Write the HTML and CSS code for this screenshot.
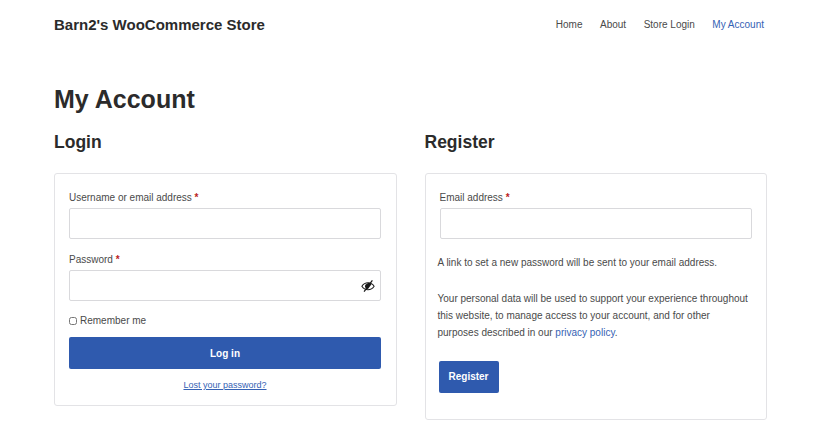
FILE: index.html
```html
<!DOCTYPE html>
<html lang="en">
<head>
<meta charset="utf-8">
<title>My Account</title>
<link rel="stylesheet" href="styles.css">
</head>
<body>
<div class="page">
  <header class="site-header">
    <a class="site-title" href="#">Barn2's WooCommerce Store</a>
    <nav class="site-nav">
      <a href="#">Home</a>
      <a href="#">About</a>
      <a href="#">Store Login</a>
      <a href="#" class="current">My Account</a>
    </nav>
  </header>
  <h1 class="page-title">My Account</h1>
  <div class="columns">
    <section class="col">
      <h2 class="col-title">Login</h2>
      <form class="card">
        <div class="field">
          <label class="label">Username or email address <span class="req">*</span></label>
          <input class="input" type="text">
        </div>
        <div class="field">
          <label class="label">Password <span class="req">*</span></label>
          <div class="pw-wrap">
            <input class="input" type="password">
            <svg class="eye" viewBox="0 0 16 16" width="14" height="14" aria-hidden="true">
              <path d="M1 8.2c1.8-2.7 4.2-4 7-4s5.200 1.300 7 4c-1.800 2.700-4.200 4-7 4s-5.200-1.300-7-4z" fill="none" stroke="#1a1a1a" stroke-width="1.200"/>
              <path d="M5 6.500a3.300 3.300 0 0 0 3 5l4-5.500a3.300 3.300 0 0 0-4-1.500z" fill="#1a1a1a"/>
              <path d="M3.500 14.500 13 1.500" fill="none" stroke="#1a1a1a" stroke-width="1.400"/>
            </svg>
          </div>
        </div>
        <label class="remember"><input class="check" type="checkbox"> Remember me</label>
        <button class="btn btn-wide" type="button">Log in</button>
        <a class="lost" href="#">Lost your password?</a>
      </form>
    </section>
    <section class="col">
      <h2 class="col-title">Register</h2>
      <form class="card">
        <div class="field">
          <label class="label">Email address <span class="req">*</span></label>
          <input class="input" type="email">
        </div>
        <p class="note first">A link to set a new password will be sent to your email address.</p>
        <p class="note">Your personal data will be used to support your experience throughout this website, to manage access to your account, and for other purposes described in our <a href="#">privacy policy</a>.</p>
        <button class="btn btn-register" type="button">Register</button>
      </form>
    </section>
  </div>
</div>
</body>
</html>
```
FILE: styles.css
```css
* { box-sizing: border-box; }
html, body { margin: 0; padding: 0; background: #fff; }
body {
  font-family: "Liberation Sans", Arial, sans-serif;
  font-size: 10px;
  color: #4a4a4a;
  overflow: hidden;
}
a { color: #3562b4; text-decoration: none; }
.page { width: 713px; margin-left: 54px; }
.site-header {
  display: flex;
  justify-content: space-between;
  align-items: center;
  height: 48px;
}
.site-title { font-size: 15px; font-weight: 700; color: #2b2b2b; }
.site-nav { display: flex; gap: 17.500px; padding-right: 3px; }
.site-nav a { color: #4a4a4a; }
.site-nav a.current { color: #3562b4; }
.page-title {
  margin: 36px 0 0;
  font-size: 25px;
  line-height: 30px;
  font-weight: 700;
  color: #2b2b2b;
}
.columns {
  display: flex;
  justify-content: space-between;
  align-items: flex-start;
  margin-top: 18px;
}
.col { width: 342.500px; }
.col-title {
  margin: 0 0 20px;
  font-size: 17.500px;
  line-height: 21px;
  font-weight: 700;
  color: #2b2b2b;
}
.card {
  display: block;
  border: 1px solid #e3e3e6;
  border-radius: 3px;
  padding: 15px 14.500px 13px 14px;
}
.field { margin-bottom: 12px; }
.label { display: block; line-height: 18px; margin-bottom: 1px; }
.req { color: #b22; font-weight: 700; }
.input {
  display: block;
  width: 100%;
  height: 31px;
  background: #fff;
  border: 1px solid #d9d9dc;
  border-radius: 2px;
  outline: 0;
  padding: 0 8px;
}
.pw-wrap { position: relative; }
.eye { position: absolute; right: 6px; top: 8.500px; }
.remember { display: flex; align-items: center; gap: 3px; line-height: 16px; }
.check { width: 8px; height: 8px; margin: 0; }
.btn {
  display: block;
  height: 32px;
  padding: 0 10px;
  background: #2f5aae;
  color: #fff;
  border: 0;
  border-radius: 2px;
  font: 700 10px "Liberation Sans", Arial, sans-serif;
}
.btn-wide { width: 100%; margin-top: 8px; }
.lost {
  display: block;
  margin-top: 9px;
  text-align: center;
  font-size: 9px;
  line-height: 14px;
  text-decoration: underline;
}
.note { margin: 19px 0 0 -2px; line-height: 17px; }
.note.first { margin-top: 14.500px; }
.btn-register { width: 60px; height: 31.500px; margin: 20.500px 0 13.500px -1px; }
```
